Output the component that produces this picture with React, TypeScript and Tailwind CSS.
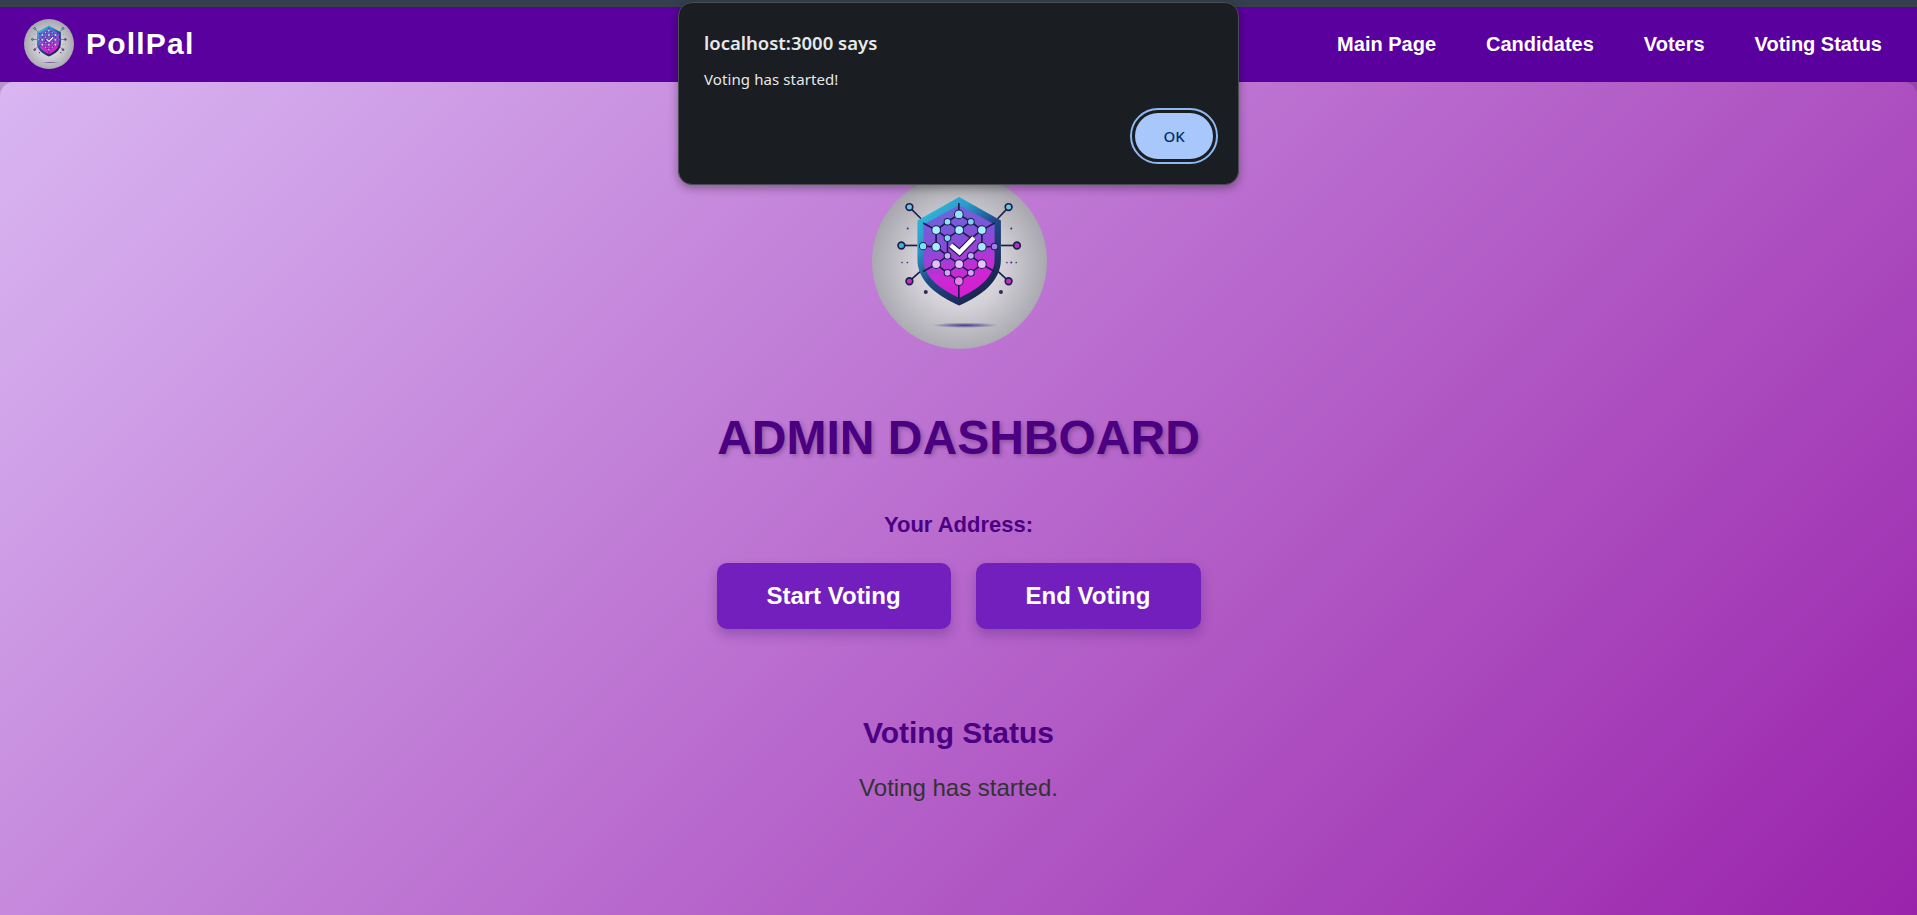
import React from "react";

const outerNodes = [
  { x: 148, y: 112, lx: 183, ly: 147, fill: "#6cc4e8" },
  { x: 445, y: 112, lx: 412, ly: 147, fill: "#6cc4e8" },
  { x: 124, y: 227, lx: 172, ly: 227, fill: "#3db4e0" },
  { x: 470, y: 227, lx: 422, ly: 227, fill: "#b52cc8" },
  { x: 148, y: 334, lx: 180, ly: 305, fill: "#c52cc8" },
  { x: 445, y: 334, lx: 414, ly: 305, fill: "#c52cc8" },
];

const innerNodes = [
  [296, 134, 13, "#8fe4f6"],
  [262, 156, 10, "#8fe4f6"],
  [332, 156, 10, "#80d0f2"],
  [228, 181, 13, "#a4f0fa"],
  [297, 181, 13, "#a4f0fa"],
  [365, 181, 13, "#a4f0fa"],
  [262, 205, 10, "#80d8f2"],
  [189, 229, 11, "#80e0f6"],
  [228, 231, 13, "#a4f0fa"],
  [365, 231, 13, "#a4e8fa"],
  [403, 230, 10, "#9a80ec"],
  [262, 258, 10, "#c4b0f6"],
  [332, 258, 10, "#c4b0f6"],
  [228, 283, 13, "#e0c0fa"],
  [297, 283, 13, "#e0c0fa"],
  [365, 283, 13, "#e8c0fa"],
  [262, 309, 10, "#d8a0f2"],
  [332, 309, 10, "#d8a0f2"],
  [296, 334, 13, "#e880e4"],
] as const;

const links = [
  "M296 134 262 156 228 181 228 231 262 258 228 283 262 309 296 334 332 309 365 283 332 258 365 231 365 181 332 156Z",
  "M262 156 297 181 332 156M297 181 262 205 228 181M297 181 333 205 365 181M262 205 262 258M228 231 189 229M365 231 403 230",
  "M262 258 297 283 332 258M297 283 262 309M297 283 332 309M296 134V100M296 334V385M228 181 189 160M365 181 403 160M228 283 189 305M365 283 403 305",
];

function Logo({ id, className }: { id: string; className: string }) {
  return (
    <svg viewBox="36 13 524 524" className={className}>
      <defs>
        <radialGradient id={`${id}-disc`} cx="50%" cy="52%" r="52%">
          <stop offset="0%" stopColor="#efeef1" />
          <stop offset="50%" stopColor="#d2d0d6" />
          <stop offset="100%" stopColor="#a6a4ac" />
        </radialGradient>
        <linearGradient id={`${id}-rim`} x1="0" y1="0" x2="0.7" y2="1">
          <stop offset="0%" stopColor="#30cce2" />
          <stop offset="32%" stopColor="#2a9ccc" />
          <stop offset="58%" stopColor="#1f4a88" />
          <stop offset="100%" stopColor="#1a2048" />
        </linearGradient>
        <linearGradient id={`${id}-face`} x1="0.3" y1="0" x2="0.5" y2="1">
          <stop offset="0%" stopColor="#6a68dc" />
          <stop offset="45%" stopColor="#8a4ad8" />
          <stop offset="75%" stopColor="#c82ad4" />
          <stop offset="100%" stopColor="#d81cd0" />
        </linearGradient>
        <radialGradient id={`${id}-shadow`}>
          <stop offset="0%" stopColor="#45358f" />
          <stop offset="100%" stopColor="#45358f" stopOpacity="0" />
        </radialGradient>
      </defs>
      <circle cx="298" cy="275" r="262" fill={`url(#${id}-disc)`} />
      <ellipse cx="314" cy="466" rx="100" ry="8" fill={`url(#${id}-shadow)`} />
      {outerNodes.map((n) => (
        <g key={`${n.x}-${n.y}`}>
          <line x1={n.x} y1={n.y} x2={n.lx} y2={n.ly} stroke="#1c2048" strokeWidth="5" />
          <circle cx={n.x} cy={n.y} r="10" fill={n.fill} stroke="#1c2048" strokeWidth="5" />
        </g>
      ))}
      <circle cx="197" cy="366" r="6" fill="#2c2a5c" />
      <circle cx="422" cy="366" r="6" fill="#2c2a5c" />
      <circle cx="143" cy="176" r="3" fill="#5a1a9c" />
      <circle cx="453" cy="176" r="3" fill="#2c2a5c" />
      <circle cx="126" cy="278" r="2.5" fill="#2c4a7c" />
      <circle cx="142" cy="278" r="2.5" fill="#5a1a9c" />
      <circle cx="440" cy="278" r="2.5" fill="#2c4a7c" />
      <circle cx="453" cy="278" r="3" fill="#5a1a9c" />
      <circle cx="468" cy="278" r="2.5" fill="#2c4a7c" />
      <path
        d="M297 82 422 152V270C422 335 360 380 297 407 234 380 172 335 172 270V152Z"
        fill={`url(#${id}-rim)`}
      />
      <path
        d="M297 106 403 164V268C403 322 352 358 297 384 242 358 190 322 190 268V164Z"
        fill={`url(#${id}-face)`}
      />
      {links.map((d) => (
        <path key={d} d={d} fill="none" stroke="#1c1c50" strokeWidth="5" />
      ))}
      {innerNodes.map(([x, y, r, fill]) => (
        <circle key={`${x}-${y}`} cx={x} cy={y} r={r} fill={fill} stroke="#1c1c50" strokeWidth="3" />
      ))}
      <path d="M272 226 298 248 341 204" fill="none" stroke="#1c1c50" strokeWidth="20" />
      <path d="M272 226 298 248 341 204" fill="none" stroke="#ffffff" strokeWidth="13" />
    </svg>
  );
}

function ActionButton({ label, width }: { label: string; width: string }) {
  return (
    <button
      className={`${width} h-[66px] rounded-[10px] bg-[#721fbd] text-[24px] font-bold text-white shadow-[0_6px_12px_rgba(60,20,110,0.3)]`}
    >
      {label}
    </button>
  );
}

export default function App() {
  return (
    <div className="relative flex h-[915px] flex-col overflow-hidden bg-[#5a009e] font-['Liberation_Sans',Arial,sans-serif]">
      <div className="h-[7px] shrink-0 border-b-2 border-[#3a4048] bg-[#333f4f]" />

      <nav className="flex h-[75px] shrink-0 items-center justify-between bg-[#5a009e] pr-[35px] pb-[2px] pl-6">
        <div className="flex items-center gap-3">
          <Logo id="nav" className="mt-[1px] h-[50px] w-[50px]" />
          <span className="text-[30px] font-bold tracking-[1.2px] text-white">PollPal</span>
        </div>
        <div className="flex items-center gap-[50px] text-[20px] font-bold text-white">
          <a>Main Page</a>
          <a>Candidates</a>
          <a>Voters</a>
          <a>Voting Status</a>
        </div>
      </nav>

      <div className="flex flex-1 flex-col bg-[linear-gradient(135deg,#b797c8,#8a1f9a)]">
        <main className="flex flex-1 flex-col items-center rounded-t-[14px] bg-[linear-gradient(135deg,#d9b6f2,#9a23ab)] pt-[92px]">
          <Logo id="hero" className="ml-[2px] h-[175px] w-[175px]" />
          <h1 className="mt-[61px] text-[48px] leading-[55px] font-bold text-[#4b0082] [text-shadow:2px_2px_4px_rgba(0,0,0,0.25)]">
            ADMIN DASHBOARD
          </h1>
          <p className="mt-[47px] text-[22px] leading-[25px] font-bold text-[#4b0082]">Your Address:</p>
          <div className="mt-[26px] flex gap-[25px]">
            <ActionButton label="Start Voting" width="w-[234px]" />
            <ActionButton label="End Voting" width="w-[225px]" />
          </div>
          <h2 className="mt-[87px] text-[30px] leading-[34px] font-bold text-[#4b0082]">Voting Status</h2>
          <p className="mt-[24px] text-[24px] leading-[28px] text-[#333333]">Voting has started.</p>
        </main>
      </div>

      <div
        role="alertdialog"
        className="absolute top-[2px] left-[678px] flex h-[183px] w-[561px] flex-col rounded-[14px] border border-[#4a4d52] bg-[#1a1d21] pt-[27px] pr-[22px] pb-[22px] pl-[25px] font-['Noto_Sans',sans-serif] shadow-[0_3px_10px_rgba(0,0,0,0.35)]"
      >
        <div className="text-[18.5px] leading-[26px] font-semibold text-[#e6e8ea]">localhost:3000 says</div>
        <div className="mt-[13px] text-[15px] leading-[20px] tracking-[0.1px] text-[#e6e8ea]">Voting has started!</div>
        <div className="mt-auto flex justify-end">
          <button className="h-[52px] w-[84px] rounded-full border-[3px] border-[#1a1d21] bg-[#a8c7fa] text-[15px] font-medium text-[#062e6f] outline-2 outline-[#8fb8f0]">
            OK
          </button>
        </div>
      </div>
    </div>
  );
}
